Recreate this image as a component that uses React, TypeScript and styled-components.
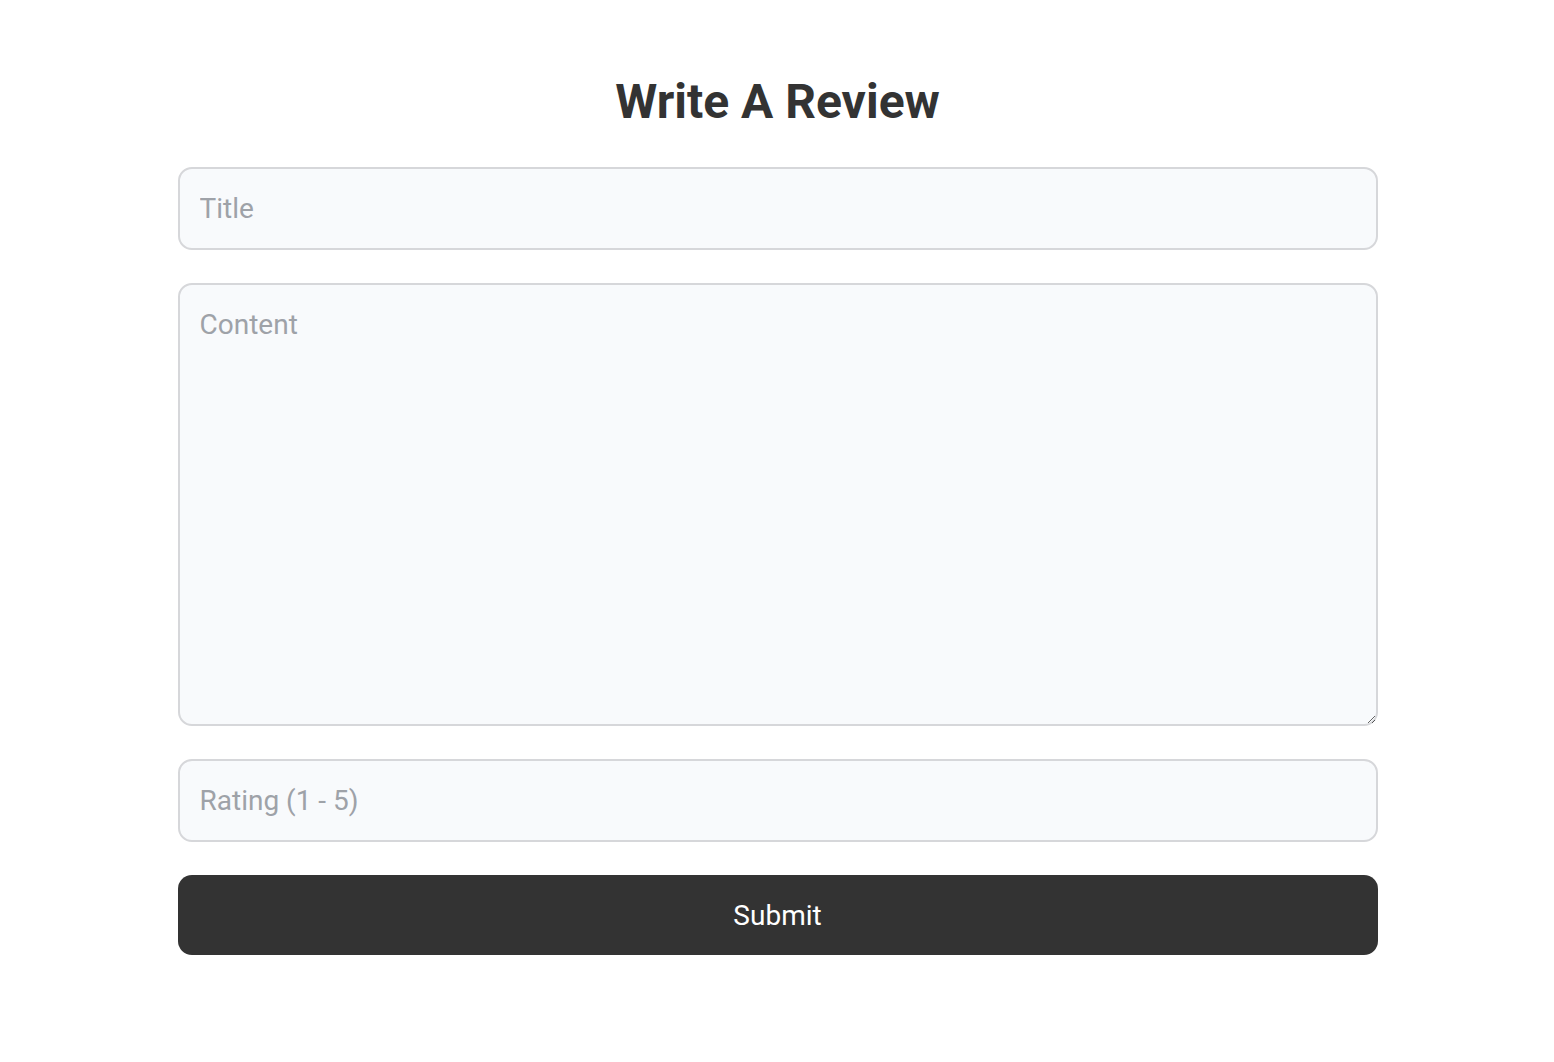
import React from 'react';
import styled, { createGlobalStyle } from 'styled-components';

const GlobalStyle = createGlobalStyle`
   * {
      box-sizing: border-box;
   }
   body {
      margin: 0;
      background: #ffffff;
      font-family: Roboto, 'Liberation Sans', sans-serif;
      color: #333333;
   }
`;

const Wrapper = styled.section`
   width: 1201px;
   margin: 0 auto;
   padding: 70px 0 0 1px;
`;

const Title = styled.h1`
   margin: 0 0 35px;
   text-align: center;
   font-size: 48px;
   line-height: 64px;
   font-weight: 700;
   color: #333333;
`;

const Form = styled.form`
   display: flex;
   flex-direction: column;
   gap: 33px;
   margin-top: -2px;
`;

const fieldStyles = `
   width: 100%;
   border: 2px solid #d6d7da;
   border-radius: 14px;
   background: #f8fafc;
   padding: 0 20px;
   font-family: Roboto, 'Liberation Sans', sans-serif;
   font-size: 28px;
   color: #333333;
   outline: none;

   &::placeholder {
      color: #9ea2a8;
   }
`;

const Input = styled.input`
   ${fieldStyles}
   height: 83px;
`;

const TextArea = styled.textarea`
   ${fieldStyles}
   height: 443px;
   padding-top: 24px;
   line-height: 32px;
   resize: vertical;
   display: block;
`;

const SubmitButton = styled.button`
   height: 80px;
   border: none;
   border-radius: 14px;
   background: #333333;
   color: #ffffff;
   font-family: Roboto, 'Liberation Sans', sans-serif;
   font-size: 28px;
   cursor: pointer;
`;

const App: React.FC = () => (
   <>
      <GlobalStyle />
      <Wrapper>
         <Title>Write A Review</Title>
         <Form onSubmit={(e) => e.preventDefault()}>
            <Input placeholder="Title" />
            <TextArea placeholder="Content" />
            <Input placeholder="Rating (1 - 5)" />
            <SubmitButton type="submit">Submit</SubmitButton>
         </Form>
      </Wrapper>
   </>
);

export default App;
